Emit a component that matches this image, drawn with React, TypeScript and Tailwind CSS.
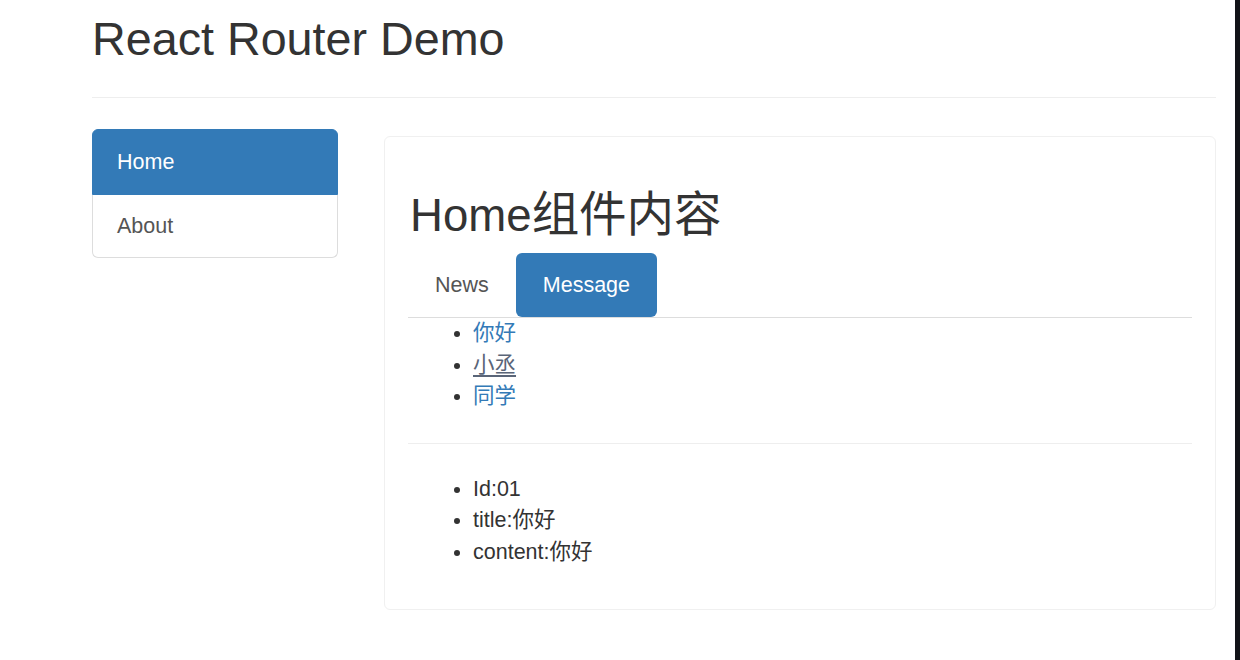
import React from "react";

const font = { fontFamily: '"Liberation Sans", Arial, "Noto Sans CJK SC", sans-serif' };

export default function App() {
  return (
    <div className="flex w-[1240px] h-[660px] bg-white text-[#333]" style={font}>
      <div className="flex-1 pl-[92px] pr-[19px]">
        <div className="border-b border-[#eee] pt-[14px] pb-[32px]">
          <h2 className="text-[46.7px] leading-[51px] font-normal">React Router Demo</h2>
        </div>
        <div className="flex gap-[46px]">
          <div className="w-[246px] mt-[31px] flex flex-col text-[21.5px]">
            <div className="h-[66px] bg-[#337ab7] text-white rounded-t-[6px] px-[24px] flex items-center border border-[#337ab7]">
              Home
            </div>
            <div className="h-[63px] border border-t-0 border-[#ddd] rounded-b-[6px] px-[24px] flex items-center text-[#555]">
              About
            </div>
          </div>
          <div className="flex-1 mt-[38px] border border-[#f0f0f0] rounded-[6px] px-[23px] pt-[23px] pb-[26px] self-start">
            <h2 className="mt-[30px] mb-[14px] ml-[2px] h-[49px] text-[45.6px] leading-[49px] font-normal">
              Home<span className="text-[47.5px] leading-[49px]">组件内容</span>
            </h2>
            <div className="flex border-b border-[#ddd] text-[21.5px]">
              <div className="h-[64px] pl-[27px] pr-[27px] flex items-center text-[#555]">News</div>
              <div className="h-[64px] px-[27px] flex items-center bg-[#337ab7] text-white rounded-[6px]">Message</div>
            </div>
            <ul className="list-disc pl-[65px] text-[21.5px] leading-[31.5px] marker:text-[#333]">
              <li className="text-[#337ab7]">你好</li>
              <li className="text-[#5a6578] underline underline-offset-[3px] decoration-[#5a6578]">小丞</li>
              <li className="text-[#337ab7]">同学</li>
            </ul>
            <hr className="mt-[30px] border-t border-[#eee]" />
            <ul className="list-disc pl-[65px] mt-[30px] mb-[15px] text-[21.5px] leading-[31.5px]">
              <li>Id:01</li>
              <li>title:你好</li>
              <li>content:你好</li>
            </ul>
          </div>
        </div>
      </div>
      <div className="w-[5px] bg-[#121318]" />
    </div>
  );
}
